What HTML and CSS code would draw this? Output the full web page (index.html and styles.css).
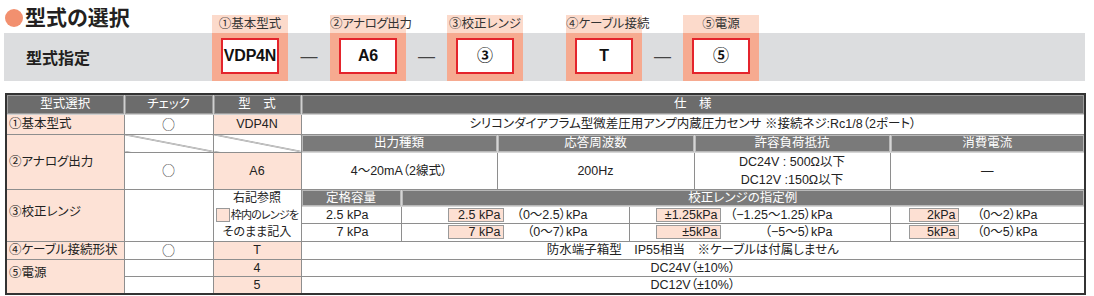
FILE: index.html
```html
<!DOCTYPE html>
<html lang="ja">
<head>
<meta charset="utf-8">
<title>型式の選択</title>
<link rel="stylesheet" href="styles.css">
</head>
<body>
<div class="page">
  <div class="selector">
    <div class="col lead">
      <div class="head"><h1 class="title"><span class="dot"></span>型式の選択</h1></div>
      <div class="body"><span class="spec-label">型式指定</span></div>
    </div>
    <div class="col pick">
      <div class="head"><div class="tag">①基本型式</div></div>
      <div class="body"><div class="val">VDP4N</div></div>
    </div>
    <div class="col gap w42"><div class="head"></div><div class="body">—</div></div>
    <div class="col pick">
      <div class="head"><div class="tag narrow">②アナログ出力</div></div>
      <div class="body"><div class="val">A6</div></div>
    </div>
    <div class="col gap w41"><div class="head"></div><div class="body">—</div></div>
    <div class="col pick">
      <div class="head"><div class="tag">③校正レンジ</div></div>
      <div class="body"><div class="val">③</div></div>
    </div>
    <div class="col gap w43"><div class="head"></div><div class="body"></div></div>
    <div class="col pick">
      <div class="head"><div class="tag">④ケーブル接続</div></div>
      <div class="body"><div class="val">T</div></div>
    </div>
    <div class="col gap w41"><div class="head"></div><div class="body">—</div></div>
    <div class="col pick">
      <div class="head"><div class="tag">⑤電源</div></div>
      <div class="body"><div class="val">⑤</div></div>
    </div>
    <div class="col fill"><div class="head"></div><div class="body"></div></div>
  </div>

  <table class="spec">
    <colgroup>
      <col class="c1"><col class="c2"><col class="c3">
      <col class="ca"><col class="cb"><col class="cc"><col class="cd"><col class="ce"><col class="cf">
    </colgroup>
    <tr class="r-head">
      <th>型式選択</th><th>チェック</th><th>型　式</th><th colspan="6">仕　様</th>
    </tr>
    <tr class="r20">
      <td class="pk name">①基本型式</td><td><span class="ck">○</span></td><td class="pk">VDP4N</td>
      <td colspan="6">シリコンダイアフラム型微差圧用アンプ内蔵圧力センサ ※接続ネジ:Rc1/8（2ポート）</td>
    </tr>
    <tr class="r18">
      <td class="pk name" rowspan="2">②アナログ出力</td><td class="diag"></td><td class="diag"></td>
      <td class="sh" colspan="2">出力種類</td><td class="sh" colspan="2">応答周波数</td><td class="sh">許容負荷抵抗</td><td class="sh">消費電流</td>
    </tr>
    <tr class="r36">
      <td><span class="ck">○</span></td><td class="pk">A6</td>
      <td colspan="2">4～20mA（2線式）</td><td colspan="2">200Hz</td>
      <td class="two">DC24V : 500Ω以下<br>DC12V :150Ω以下</td><td>—</td>
    </tr>
    <tr class="r16">
      <td class="pk name up" rowspan="3">③校正レンジ</td><td rowspan="3"></td>
      <td rowspan="3" class="note">右記参照<br><span class="tight"><span class="sq"></span>枠内のレンジを</span><br>そのまま記入</td>
      <td class="sh">定格容量</td><td class="sh" colspan="5">校正レンジの指定例</td>
    </tr>
    <tr class="r17">
      <td class="rated">2.5 kPa</td>
      <td colspan="2"><div class="ex e1"><span class="bx">2.5 kPa</span><span class="rg">（0～2.5）kPa</span></div></td>
      <td colspan="2"><div class="ex e2"><span class="bx">±1.25kPa</span><span class="rg">（−1.25～1.25）kPa</span></div></td>
      <td><div class="ex e3"><span class="bx">2kPa</span><span class="rg">（0～2）kPa</span></div></td>
    </tr>
    <tr class="r18">
      <td class="rated">7 kPa</td>
      <td colspan="2"><div class="ex e1"><span class="bx">7 kPa</span><span class="rg">（0～7）kPa</span></div></td>
      <td colspan="2"><div class="ex e2"><span class="bx">±5kPa</span><span class="rg">（−5～5）kPa</span></div></td>
      <td><div class="ex e3"><span class="bx">5kPa</span><span class="rg">（0～5）kPa</span></div></td>
    </tr>
    <tr class="r18">
      <td class="pk name">④ケーブル接続形状</td><td><span class="ck">○</span></td><td class="pk">T</td>
      <td colspan="6">防水端子箱型　IP55相当　※ケーブルは付属しません</td>
    </tr>
    <tr class="r17">
      <td class="pk name up" rowspan="2">⑤電源</td><td></td><td class="pk">4</td>
      <td colspan="6">DC24V（±10%）</td>
    </tr>
    <tr class="r18">
      <td></td><td class="pk">5</td>
      <td colspan="6">DC12V（±10%）</td>
    </tr>
  </table>
</div>
</body>
</html>
```
FILE: styles.css
```css
* { box-sizing: border-box; }
html, body { margin: 0; padding: 0; background: #fff; }
body {
  font-family: "Liberation Sans", "Noto Sans CJK JP", sans-serif;
  color: #222;
  font-feature-settings: "palt";
}
.page { width: 1094px; padding: 0 0 0 4px; }

/* ---------- selector ---------- */
.selector { display: flex; width: 1081px; height: 81px; }
.col { display: flex; flex-direction: column; }
.head { height: 33px; }
.body { height: 48px; background: #dcdddf; }
.lead { width: 208px; }
.title {
  margin: 7px 0 0 1px;
  display: flex; align-items: center; gap: 2px;
  font-size: 21px; line-height: 21px; font-weight: bold; color: #231f20;
}
.dot { width: 18px; height: 18px; border-radius: 50%; background: #f2906f; }
.lead .body { display: flex; align-items: center; padding-left: 22px; }
.spec-label { font-size: 16px; font-weight: bold; color: #231f20; }

.pick { width: 76px; }
.pick .head { display: flex; flex-direction: column; justify-content: flex-end; }
.tag {
  height: 18px; background: #fcdacb; color: #333;
  font-size: 12.5px; line-height: 18px; text-align: center; white-space: nowrap;
}
.tag.narrow { letter-spacing: -0.4px; }
.pick .body { background: #f6aa90; display: flex; justify-content: center; padding-top: 5px; }
.val {
  width: 58px; height: 36px; border: 2px solid #e4242c; background: #fff;
  font-size: 16px; line-height: 32px; font-weight: bold; text-align: center; color: #111;
  white-space: nowrap; letter-spacing: -0.2px;
}
.gap .body { display: flex; align-items: center; justify-content: center; font-size: 17px; color: #444; }
.w41 { width: 41px; } .w42 { width: 42px; } .w43 { width: 43px; }
.fill { flex: 1; }

/* ---------- table ---------- */
.spec {
  margin: 12px 0 0 1px;
  width: 1079px;
  table-layout: fixed;
  border-collapse: collapse;
  border: 2px solid #333;
  font-size: 12.5px;
  color: #222;
}
.c1 { width: 118px; } .c2 { width: 89px; } .c3 { width: 88px; }
.ca { width: 100px; } .cb { width: 96px; } .cc { width: 132px; }
.cd { width: 65px; } .ce { width: 196px; } .cf { width: 195px; }

.spec th, .spec td {
  border: 1px solid #8e8e8e;
  padding: 0;
  text-align: center;
  vertical-align: middle;
  white-space: nowrap;
  overflow: hidden;
  line-height: 16px;
  font-weight: normal;
}
.spec th {
  background: #6c6c6c; color: #fff;
  box-shadow: inset 0 0 0 1px #9c9c9c;
  border-color: #d0d0d0;
}
.r-head { height: 20px; }
.r20 { height: 20px; }
.r18 { height: 18px; }
.r17 { height: 17px; }
.r16 { height: 16px; }
.r36 { height: 36px; }

.ck { font-family: "Noto Sans CJK JP", sans-serif; font-size: 13px; color: #333; }

.pk { background: #fde2d6; }
.spec td.name { text-align: left; padding-left: 2px; }
.spec td.up { padding-bottom: 6px; }
.spec td.sh {
  background: #7a7a7a; color: #fff;
  box-shadow: inset 0 0 0 1px #b9b9b9;
  border-color: #d5d5d5;
}
.diag {
  background: linear-gradient(to top right, transparent calc(50% - 0.8px), #666 50%, transparent calc(50% + 0.8px));
}
.spec td.two { line-height: 18px; }
.spec td.note { line-height: 17px; font-size: 12px; }
.tight { font-size: 11px; letter-spacing: -0.8px; }
.sq {
  display: inline-block; width: 14px; height: 14px;
  border: 1px solid #999; background: #fde2d6;
  vertical-align: -3px; margin-right: 1px;
}
.spec td.rated { text-align: right; padding-right: 32px; }

.ex { display: flex; align-items: center; }
.bx {
  height: 14px; line-height: 13px;
  border: 1px solid #9a9a9a; background: #fde0d3;
  text-align: right; padding-right: 2px;
}
.rg { text-align: right; }
.e1 { padding-left: 46px; }
.e1 .bx { width: 56px; } .e1 .rg { width: 84px; }
.e2 { padding-left: 26px; }
.e2 .bx { width: 65px; } .e2 .rg { width: 112px; }
.e3 { padding-left: 18px; }
.e3 .bx { width: 50px; } .e3 .rg { width: 79px; }
```
